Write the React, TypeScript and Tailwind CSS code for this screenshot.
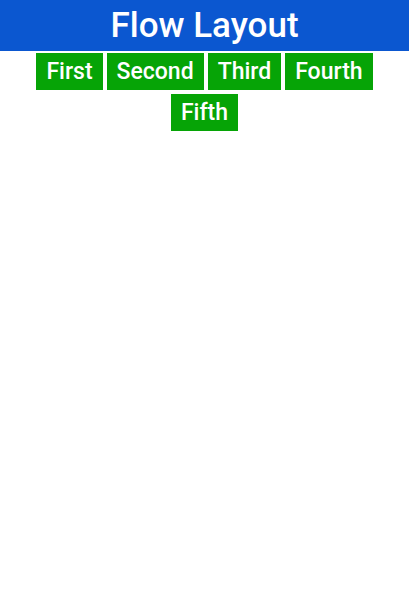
export default function App() {
  return (
    <div className="w-[409px] h-[613px] bg-white" style={{ fontFamily: "Roboto, sans-serif" }}>
      <div className="h-[51px] bg-[#0b57d0] flex items-center justify-center text-white text-[35px] font-medium leading-none">
        Flow Layout
      </div>
      <div className="flex flex-wrap justify-center">
        {["First", "Second", "Third", "Fourth", "Fifth"].map((t) => (
          <div key={t} className="m-[2px] h-[37px] px-[10px] bg-[#06a406] text-white text-[23px] font-medium flex items-center leading-none">
            {t}
          </div>
        ))}
      </div>
    </div>
  );
}
